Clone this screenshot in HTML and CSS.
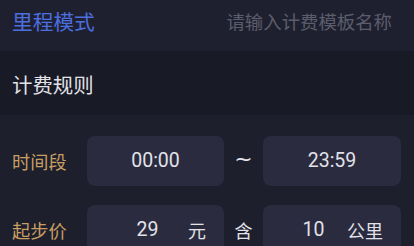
FILE: index.html
```html
<!DOCTYPE html>
<html lang="zh">
<head>
<meta charset="utf-8">
<link rel="stylesheet" href="styles.css">
</head>
<body>
<div class="page">
  <div class="topbar">
    <span class="mode">里程模式</span>
    <span class="placeholder">请输入计费模板名称</span>
  </div>
  <div class="section">计费规则</div>
  <div class="rows">
    <div class="row">
      <span class="label">时间段</span>
      <div class="box"><span class="val full">00:00</span></div>
      <span class="sep tilde">~</span>
      <div class="box"><span class="val full">23:59</span></div>
    </div>
    <div class="row">
      <span class="label">起步价</span>
      <div class="box"><span class="val num">29</span><span class="unit">元</span></div>
      <span class="sep">含</span>
      <div class="box"><span class="val num num2">10</span><span class="unit">公里</span></div>
    </div>
  </div>
</div>
</body>
</html>
```
FILE: styles.css
```css
html, body {
  margin: 0;
  padding: 0;
  background: #1e1f2d;
}
body {
  width: 414px;
  height: 246px;
  overflow: hidden;
  font-family: "Noto Sans CJK SC", "Noto Sans", sans-serif;
}
.page {
  display: flex;
  flex-direction: column;
}
.topbar {
  height: 51px;
  background: #1f202f;
  display: flex;
  align-items: center;
  justify-content: space-between;
  padding: 0 22px 0 12px;
}
.mode {
  color: #4c6fe0;
  font-size: 20.7px;
  line-height: 1;
  margin-top: -8px;
}
.placeholder {
  color: #5b5d6c;
  font-size: 18.4px;
  line-height: 1;
  margin-top: -8px;
}
.section {
  height: 64px;
  box-sizing: border-box;
  padding: 2px 0 0 12px;
  background: #181a25;
  color: #e2e2e8;
  font-size: 20.4px;
  display: flex;
  align-items: center;
}
.rows {
  display: flex;
  flex-direction: column;
  gap: 19px;
  padding: 21px 13px 0 12px;
  background: #1e1f2d;
}
.row {
  display: flex;
  align-items: center;
  height: 50px;
}
.label {
  color: #c89e61;
  font-size: 18.2px;
  width: 75px;
  line-height: 1;
}
.box {
  width: 137px;
  height: 50px;
  border-radius: 8px;
  background: #2a2b3f;
  display: flex;
  align-items: center;
  box-sizing: border-box;
}
.box + .sep + .box {
  width: 138px;
}
.sep {
  width: 39px;
  text-align: center;
  color: #e2e2e8;
  font-size: 18px;
  line-height: 1;
}
.tilde {
  font-family: "DejaVu Sans", sans-serif;
  font-size: 22px;
  margin-top: -4px;
}
.val {
  color: #e2e2e8;
  font-size: 19.5px;
  font-family: "Roboto", "Noto Sans CJK SC", sans-serif;
  line-height: 1;
}
.full {
  flex: 1;
  text-align: center;
}
.num {
  flex: 1;
  text-align: center;
  padding-left: 20px;
}
.num2 {
  padding-left: 17px;
}
.unit {
  color: #e2e2e8;
  font-size: 18px;
  line-height: 1;
  margin-right: 18px;
}
```
